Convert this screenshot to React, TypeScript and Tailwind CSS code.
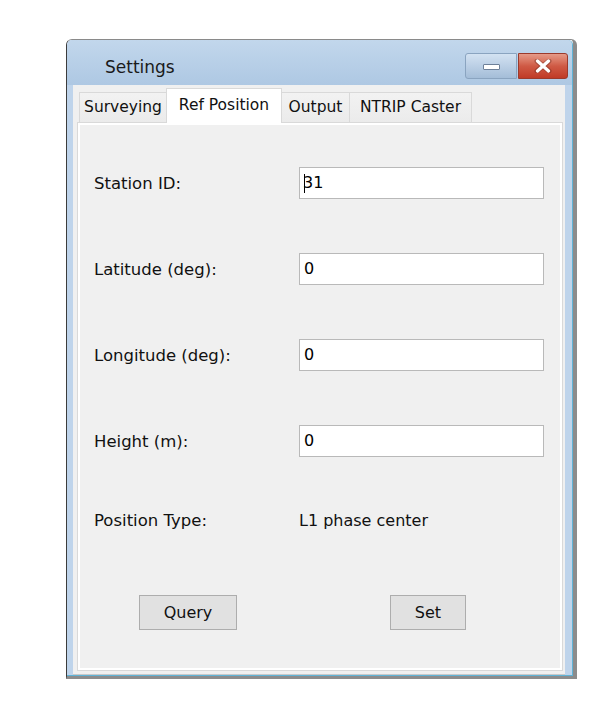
const rows = [
  { label: "Station ID:", value: "31", caret: true },
  { label: "Latitude (deg):", value: "0" },
  { label: "Longitude (deg):", value: "0" },
  { label: "Height (m):", value: "0" },
];

const tabs = [
  { name: "Surveying", w: "w-[88px]" },
  { name: "Ref Position", w: "w-[116px]" },
  { name: "Output", w: "w-[69px]" },
  { name: "NTRIP Caster", w: "w-[123px]" },
];

function CaptionButtons() {
  return (
    <div className="flex gap-[1px] mt-[13px]">
      <div className="w-[52px] h-[26px] rounded-l-[3px] border border-[#8aa4c0] bg-gradient-to-b from-[#d3e2f2] to-[#a4bdd8] flex items-center justify-center">
        <div className="w-[17px] h-[6px] mt-[2px] bg-white border border-[#6d8099] rounded-[1px]" />
      </div>
      <div className="w-[50px] h-[26px] rounded-r-[3px] border border-[#9b3a2c] bg-gradient-to-b from-[#e59a88] via-[#cf5a45] to-[#c03a26] flex items-center justify-center">
        <svg width="18" height="14" viewBox="0 0 18 14">
          <path d="M3 2 L15 12 M15 2 L3 12" stroke="#5a2018" strokeWidth="5" strokeLinecap="round" opacity="0.35" />
          <path d="M3.5 2 L14.5 12 M14.5 2 L3.5 12" stroke="#ffffff" strokeWidth="3.2" strokeLinecap="round" />
        </svg>
      </div>
    </div>
  );
}

function Field({ value, caret }: { value: string; caret?: boolean }) {
  return (
    <div className="w-[245px] h-[32px] bg-white border border-[#b9b9b9] flex items-center pl-[4px] text-[16px] text-black">
      {caret && <span className="inline-block w-[1px] h-[19px] bg-black -mr-[2px]" />}
      <span>{value}</span>
    </div>
  );
}

export default function App() {
  return (
    <div className="w-[610px] h-[708px] bg-white font-['DejaVu_Sans',sans-serif] text-[#111]">
      <div className="pt-[39px] pl-[66px]">
        <div className="w-[511px] h-[640px] border-l border-t border-l-[#3c3c3c] border-t-[#8a8a8a] border-r-[4px] border-b-[3px] border-r-[#8c8c8c] border-b-[#8c8c8c] rounded-tl-[6px] rounded-tr-[6px]">
          <div className="h-full flex flex-col bg-[#bfd4eb] border-r border-b border-[#5fb3d6] rounded-tl-[5px] rounded-tr-[5px] pl-[6px] pr-[7px]">
            {/* title bar */}
            <div className="h-[45px] flex justify-between bg-gradient-to-b from-[#c2d7ec] to-[#aec8e3] -ml-[6px] -mr-[7px] pl-[38px] pr-[4px] rounded-tl-[5px] rounded-tr-[5px]">
              <div className="text-[17px] text-[#1a1a1a] pt-[15px]">Settings</div>
              <CaptionButtons />
            </div>
            {/* client */}
            <div className="flex-1 bg-[#f0f0f0] pl-[4px] pr-[2px] pb-[3px] flex flex-col border-b border-[#c9c9c9]">
              <div className="h-[37px] flex items-end text-[15.5px] pl-[2px]">
                {tabs.map((t) =>
                  t.name === "Ref Position" ? (
                    <div
                      key={t.name}
                      className={`${t.w} h-[35px] -mb-[1px] -ml-[1px] bg-white border border-b-0 border-[#d9d9d9] flex justify-center items-start pt-[5px] relative z-10`}
                    >
                      {t.name}
                    </div>
                  ) : (
                    <div
                      key={t.name}
                      className={`${t.w} h-[30px] bg-gradient-to-b from-[#f2f2f2] to-[#ebebeb] border border-b-0 border-[#d9d9d9] -ml-[1px] first:ml-0 flex justify-center items-center pt-[1px]`}
                    >
                      {t.name}
                    </div>
                  )
                )}
              </div>
              <div className="flex-1 border border-[#d9d9d9]">
                <div className="h-full border-2 border-white bg-[#f0f0f0] pl-[14px] pt-[42px] text-[16.5px]">
                  {rows.map((r) => (
                    <div key={r.label} className="h-[32px] mb-[54px] flex items-center">
                      <div className="w-[205px] pt-[2px]">{r.label}</div>
                      <Field value={r.value} caret={r.caret} />
                    </div>
                  ))}
                  <div className="h-[32px] flex items-center -mt-[6px]">
                    <div className="w-[205px]">Position Type:</div>
                    <div className="text-[16px]">L1 phase center</div>
                  </div>
                  <div className="flex mt-[58px] text-[16px]">
                    <div className="ml-[45px] w-[98px] h-[35px] bg-[#e1e1e1] border border-[#adadad] flex items-center justify-center">
                      Query
                    </div>
                    <div className="ml-[153px] w-[76px] h-[35px] bg-[#e1e1e1] border border-[#adadad] flex items-center justify-center">
                      Set
                    </div>
                  </div>
                </div>
              </div>
            </div>
          </div>
        </div>
      </div>
    </div>
  );
}
